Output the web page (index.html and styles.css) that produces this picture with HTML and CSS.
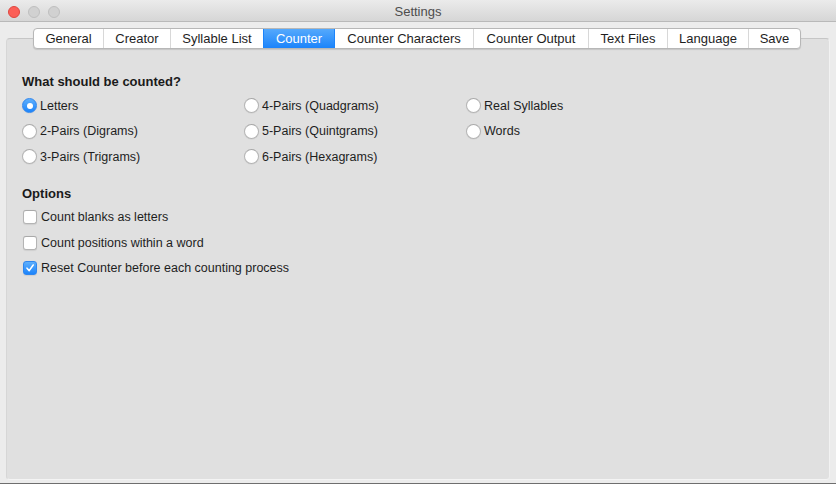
FILE: index.html
```html
<!DOCTYPE html>
<html>
<head>
<meta charset="utf-8">
<link rel="stylesheet" href="styles.css">
</head>
<body>
<div class="window">
  <div class="titlebar">
    <div class="lights">
      <span class="light red"></span>
      <span class="light gray"></span>
      <span class="light gray"></span>
    </div>
    <div class="title">Settings</div>
  </div>
  <div class="main">
    <div class="tabs">
      <div class="tab t-general">General</div>
      <div class="tab t-creator">Creator</div>
      <div class="tab t-syll">Syllable List</div>
      <div class="tab t-counter active">Counter</div>
      <div class="tab t-cchar">Counter Characters</div>
      <div class="tab t-cout">Counter Output</div>
      <div class="tab t-text">Text Files</div>
      <div class="tab t-lang">Language</div>
      <div class="tab t-save">Save</div>
    </div>
    <div class="box">
      <div class="heading">What should be counted?</div>
      <div class="radios">
        <label class="opt"><span class="radio on"></span>Letters</label>
        <label class="opt"><span class="radio"></span>4-Pairs (Quadgrams)</label>
        <label class="opt"><span class="radio"></span>Real Syllables</label>
        <label class="opt"><span class="radio"></span>2-Pairs (Digrams)</label>
        <label class="opt"><span class="radio"></span>5-Pairs (Quintgrams)</label>
        <label class="opt"><span class="radio"></span>Words</label>
        <label class="opt"><span class="radio"></span>3-Pairs (Trigrams)</label>
        <label class="opt"><span class="radio"></span>6-Pairs (Hexagrams)</label>
      </div>
      <div class="heading h2">Options</div>
      <div class="checks">
        <label class="opt"><span class="check"></span>Count blanks as letters</label>
        <label class="opt"><span class="check"></span>Count positions within a word</label>
        <label class="opt"><span class="check on"><svg width="10" height="10" viewBox="0 0 10 10"><path d="M2 5.2 L4.2 7.6 L8.2 2" fill="none" stroke="#fff" stroke-width="1.6" stroke-linecap="round" stroke-linejoin="round"/></svg></span>Reset Counter before each counting process</label>
      </div>
    </div>
  </div>
</div>
</body>
</html>
```

FILE: styles.css
```css
* { box-sizing: border-box; }
html, body { margin: 0; padding: 0; }
body {
  width: 836px;
  height: 484px;
  overflow: hidden;
  background: #6e6e6e;
  font-family: "Liberation Sans", Arial, sans-serif;
  font-size: 13px;
  color: #1e1e1e;
}
.window {
  width: 836px;
  height: 483px;
  background: #ececec;
  display: flex;
  flex-direction: column;
}
.titlebar {
  height: 22px;
  flex: none;
  background: linear-gradient(#ebebeb, #d6d6d6);
  border-bottom: 1px solid #b9b9b9;
  position: relative;
  display: flex;
  align-items: center;
  justify-content: center;
}
.lights {
  position: absolute;
  left: 8px;
  top: 6px;
  display: flex;
  gap: 8px;
}
.light {
  width: 12px;
  height: 12px;
  border-radius: 50%;
  display: block;
}
.light.red { background: #fc5f57; border: 1px solid #de4740; }
.light.gray { background: #d1d1d1; border: 1px solid #bfbfbf; }
.title {
  color: #4d4d4d;
  font-size: 13px;
  padding-top: 2px;
}
.main {
  flex: 1;
  padding: 6px 6px 3px 6px;
  display: flex;
  flex-direction: column;
}
.tabs {
  align-self: center;
  margin-left: -2px;
  display: flex;
  height: 21px;
  background: #fff;
  border: 1px solid #b7b7b7;
  border-radius: 4px;
  box-shadow: 0 1px 1px rgba(0,0,0,0.12);
  position: relative;
  z-index: 2;
  margin-bottom: -11px;
  overflow: hidden;
}
.tab {
  display: flex;
  align-items: center;
  justify-content: center;
  border-left: 1px solid #d8d8d8;
  color: #1e1e1e;
  font-size: 13px;
}
.tab:first-child { border-left: none; }
.tab.active {
  background: linear-gradient(#55a9fc, #1c84fb);
  color: #fff;
  border-left-color: #1c84fb;
}
.tab.active + .tab { border-left-color: #1c84fb; }
.t-general { width: 69px; }
.t-creator { width: 67px; }
.t-syll { width: 93px; }
.t-counter { width: 71px; }
.t-cchar { width: 139px; }
.t-cout { width: 115px; }
.t-text { width: 79px; }
.t-lang { width: 81px; }
.t-save { width: 52px; }
.box {
  flex: 1;
  background: #e0e0e0;
  border: 1px solid #d0d0d0;
  border-top-color: #c6c6c6;
  border-bottom-color: #f4f4f4;
  border-left-color: #d6d6d6;
  border-right-color: #f2f2f2;
  border-radius: 4px;
  padding: 35px 0 0 15px;
}
.heading {
  font-weight: bold;
  font-size: 13px;
  height: 16px;
  line-height: 16px;
  color: #1a1a1a;
}
.h2 { margin-top: 16px; }
.radios {
  margin-top: 3px;
  display: grid;
  grid-template-columns: 222px 222px 222px;
  grid-auto-rows: 25.5px;
}
.checks {
  margin-top: 3px;
  display: grid;
  grid-auto-rows: 25.5px;
}
.opt {
  display: flex;
  align-items: center;
  gap: 3px;
  color: #1e1e1e;
  font-size: 12.5px;
}
.radio {
  width: 15px;
  height: 15px;
  border-radius: 50%;
  background: #fff;
  border: 1px solid #b4b4b4;
  border-top-color: #a9a9a9;
  box-shadow: 0 0.5px 1px rgba(0,0,0,0.08);
  display: flex;
  align-items: center;
  justify-content: center;
  flex: none;
}
.radio.on {
  background: linear-gradient(#5eaffc, #1c84fb);
  border-color: #2f86ef;
}
.radio.on::after {
  content: "";
  width: 6px;
  height: 6px;
  border-radius: 50%;
  background: #fff;
}
.check {
  width: 14px;
  height: 14px;
  border-radius: 3px;
  background: #fff;
  border: 1px solid #b4b4b4;
  border-top-color: #a9a9a9;
  box-shadow: 0 0.5px 1px rgba(0,0,0,0.08);
  display: flex;
  align-items: center;
  justify-content: center;
  flex: none;
  margin-left: 1px;
  margin-right: 1px;
}
.check.on {
  background: linear-gradient(#5eaffc, #1c84fb);
  border-color: #2f86ef;
}
```
